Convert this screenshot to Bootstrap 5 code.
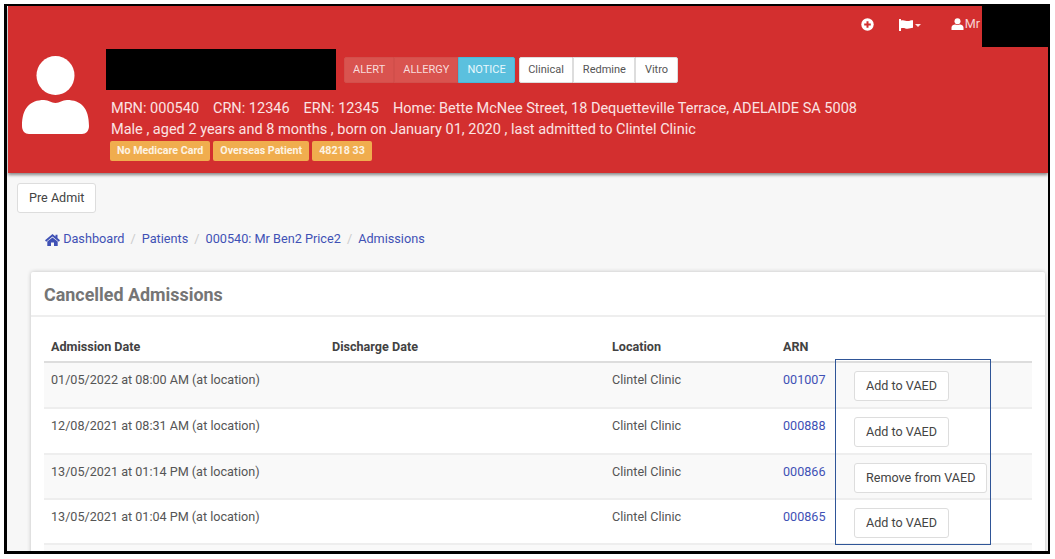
<!DOCTYPE html>
<html lang="en">
<head>
<meta charset="utf-8">
<title>Cancelled Admissions</title>
<link href="https://cdn.jsdelivr.net/npm/bootstrap@5.3.0/dist/css/bootstrap.min.css" rel="stylesheet">
<style>
html,body{height:559px;overflow:hidden;background:#fff}
body{font-family:Roboto,"Liberation Sans",sans-serif;font-size:12.6px;color:#555}
.frame{position:relative;margin:4px 5px 5px 4px;height:550px;border:solid #000;border-width:2px 2px 3px 3px;background:#f7f7f7;overflow:hidden}
.hero{background:#d32f2f;height:167px;margin-left:1px;color:#fbe3e3;box-shadow:0 2px 3px rgba(0,0,0,.45);position:relative}
.topbar{height:43px;padding-right:68px;padding-bottom:6px;gap:25px;color:#fff}
.topitem{display:flex;align-items:center;gap:1px;font-size:12.6px;color:#f6d5d5}
.redact-top{position:absolute;top:0;right:0;width:66px;height:41px;background:#000}
.avatar{width:67px;margin:7px 17px 0 14px;flex:none}
.redact-name{width:230px;height:41px;background:#000;margin-right:8px}
.seg{font-size:11px;line-height:14px;padding:5px 8px;height:26px;border:1px solid transparent;background:#d9534f;color:#f8dcdc;border-radius:0}
.seg.alert-seg{background:#d9534f;border-color:#d24f4b}
.seg.note-seg{background:#5bc0de;color:#e9f8fd;border-color:#46b8da}
.seg.white-seg{background:#fff;color:#555;border-color:#ddd;padding:5px 8.5px}
.seg:first-child{border-radius:2px 0 0 2px}.seg:last-child{border-radius:0 2px 2px 0}
.info{font-size:14.53px;line-height:21px;margin-top:8px;padding-left:5px}
.info span{margin-right:10.3px}
.tags{gap:3px;padding-left:4px;margin-top:1px}
.tag{background:#f0ad4e;color:#fdf3e3;font-size:10.7px;font-weight:700;line-height:14px;padding:3px 7px;border-radius:2px}
.preadmit{margin:10px 0 0 10px;font-size:12.6px;line-height:16px;padding:6px 11px;background:#fff;border:1px solid #ddd;border-radius:3px;color:#444}
.crumbs{margin:0 0 0 38px;padding:0;height:59px;padding-top:16px;font-size:12.7px;--bs-breadcrumb-divider-color:#ccc;--bs-breadcrumb-item-padding-x:6px}
.crumbs a,.crumbs .breadcrumb-item.active{color:#3f51b5;text-decoration:none}
.panel{margin:0 3px 0 24px;background:#fff;border:0;border-radius:2px;box-shadow:0 0 4px rgba(0,0,0,.22);height:300px}
.panel-head{height:45px;padding:12px 13px 0;font-size:17.9px;line-height:22px;font-weight:700;color:#757575;border-bottom:2px solid #eee}
.panel-body{padding:13px 13px 0}
.vtable{margin:0;table-layout:fixed;width:988px;font-size:12.6px;color:#555}
.vtable th{padding:9px 7px 6px;line-height:16px;height:32px;font-weight:700;color:#424242;border-bottom:2px solid #ddd}
.vtable td{padding:8px 7px 0;height:46px;line-height:18px;vertical-align:top;border-bottom:2px solid #eee;background:#fff;color:#555;box-shadow:none}
.vtable tbody tr:nth-child(n+3) td{height:45px}
.vtable tr.shade td{background:#f9f9f9}
.vtable td.act{padding:8px 0 0 14px}
.vtable a{color:#3f51b5;text-decoration:none}
.vbtn{font-size:12.6px;line-height:16px;padding:6px 11px;background:#fff;border:1px solid #ddd;border-radius:3px;color:#444;white-space:nowrap}
.bluebox{position:absolute;left:828px;top:353px;width:156px;height:186px;border:1px solid #2f5597;pointer-events:none}
</style>
</head>
<body>
<div class="frame">
  <header class="hero">
    <div class="topbar d-flex justify-content-end align-items-center">
      <svg width="13" height="13" viewBox="0 0 13 13" aria-label="add"><circle cx="6.5" cy="6.5" r="6.2" fill="#fff"/><path d="M6.5 3.2v6.6M3.2 6.5h6.6" stroke="#d32f2f" stroke-width="2"/></svg>
      <span class="topitem"><svg width="23" height="12" viewBox="0 0 23 12" aria-label="flags"><path d="M0 0h2v12H0z" fill="#fff"/><path d="M2 1.500c3-1 5 .8 7 .6 1.500-.1 3-.8 5-.8v7.500c-2 0-3.500 1-5.500 1-2 0-3.500-1.300-6.500-.5z" fill="#fff"/><path d="M16 5h6l-3 3z" fill="#fbe3e3"/></svg></span>
      <span class="topitem ms-1"><svg width="13" height="12" viewBox="0 0 12 12" aria-label="user"><circle cx="6" cy="3.200" r="3" fill="#fff"/><path d="M0 12V9.500C0 7.500 2 6.500 3.500 6.500 4.500 7 7.500 7 8.500 6.500 10 6.500 12 7.500 12 9.500V12z" fill="#fff"/></svg>Mr</span>
    </div>
    <div class="redact-top"></div>
    <div class="d-flex">
      <svg class="avatar" viewBox="0 0 67 78" height="78" aria-label="patient"><ellipse cx="33.500" cy="19.500" rx="19" ry="19.500" fill="#fff"/><path d="M0 70C0 52 8 44 22 44c5 0 7 3 11.500 3S40 44 45 44c14 0 22 8 22 26 0 5-3 8-7 8H7c-4 0-7-3-7-8z" fill="#fff"/></svg>
      <div class="flex-grow-1">
        <div class="d-flex align-items-center">
          <div class="redact-name"></div>
          <div class="btn-group">
            <button class="seg alert-seg">ALERT</button>
            <button class="seg alert-seg">ALLERGY</button>
            <button class="seg note-seg">NOTICE</button>
          </div>
          <div class="btn-group ms-1">
            <button class="seg white-seg">Clinical</button>
            <button class="seg white-seg">Redmine</button>
            <button class="seg white-seg">Vitro</button>
          </div>
        </div>
        <div class="info">
          <div><span>MRN: 000540</span> <span>CRN: 12346</span> <span>ERN: 12345</span> Home: Bette McNee Street, 18 Dequetteville Terrace, ADELAIDE SA 5008</div>
          <div>Male , aged 2 years and 8 months , born on January 01, 2020 , last admitted to Clintel Clinic</div>
        </div>
        <div class="tags d-flex">
          <span class="tag">No Medicare Card</span><span class="tag">Overseas Patient</span><span class="tag">48218 33</span>
        </div>
      </div>
    </div>
  </header>
  <button class="preadmit">Pre Admit</button>
  <nav aria-label="breadcrumb">
    <ol class="breadcrumb crumbs">
      <li class="breadcrumb-item"><a href="#"><svg width="15" height="12" viewBox="0 0 15 12" aria-hidden="true"><path d="M7.500 0 0 6.200l1.200 1.600 6.300-5.200 6.300 5.200L15 6.200l-2.500-2.100V.8h-2v1.700zM2.300 7.600V12H6V8.500h3V12h3.700V7.600L7.500 3.500z" fill="#3f51b5"/></svg> Dashboard</a></li>
      <li class="breadcrumb-item"><a href="#">Patients</a></li>
      <li class="breadcrumb-item"><a href="#">000540: Mr Ben2 Price2</a></li>
      <li class="breadcrumb-item active" aria-current="page">Admissions</li>
    </ol>
  </nav>
  <section class="panel">
    <div class="panel-head">Cancelled Admissions</div>
    <div class="panel-body">
      <table class="table vtable">
        <colgroup><col style="width:281px"><col style="width:280px"><col style="width:171px"><col style="width:64px"><col></colgroup>
        <thead><tr><th>Admission Date</th><th>Discharge Date</th><th>Location</th><th>ARN</th><th></th></tr></thead>
        <tbody>
          <tr class="shade"><td>01/05/2022 at 08:00 AM (at location)</td><td></td><td>Clintel Clinic</td><td><a href="#">001007</a></td><td class="act"><button class="vbtn">Add to VAED</button></td></tr>
          <tr><td>12/08/2021 at 08:31 AM (at location)</td><td></td><td>Clintel Clinic</td><td><a href="#">000888</a></td><td class="act"><button class="vbtn">Add to VAED</button></td></tr>
          <tr class="shade"><td>13/05/2021 at 01:14 PM (at location)</td><td></td><td>Clintel Clinic</td><td><a href="#">000866</a></td><td class="act"><button class="vbtn">Remove from VAED</button></td></tr>
          <tr><td>13/05/2021 at 01:04 PM (at location)</td><td></td><td>Clintel Clinic</td><td><a href="#">000865</a></td><td class="act"><button class="vbtn">Add to VAED</button></td></tr>
          <tr class="shade"><td colspan="5"></td></tr>
        </tbody>
      </table>
    </div>
  </section>
  <div class="bluebox"></div>
</div>
<script src="https://cdn.jsdelivr.net/npm/bootstrap@5.3.0/dist/js/bootstrap.bundle.min.js"></script>
</body>
</html>
